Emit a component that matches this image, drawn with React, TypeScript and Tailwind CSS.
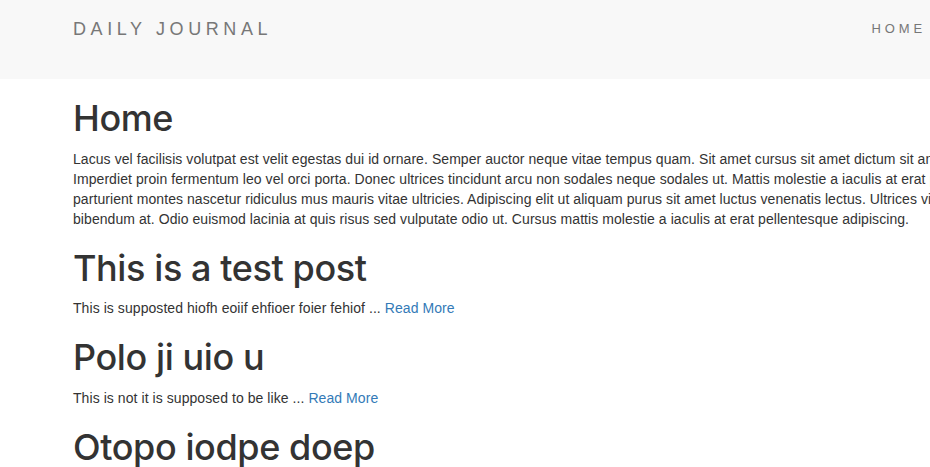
import React from "react";

type Post = {
  title: string;
  excerpt: string;
};

const posts: Post[] = [
  { title: "This is a test post", excerpt: "This is supposted hiofh eoiif ehfioer foier fehiof" },
  { title: "Polo ji uio u", excerpt: "This is not it is supposed to be like" },
  { title: "Otopo iodpe doep", excerpt: "Lorem ipsum dolor sit amet consectetur adipiscing" },
];

// the home text is wider than the window, so the lines are kept as they break
const homeLines = [
  "Lacus vel facilisis volutpat est velit egestas dui id ornare. Semper auctor neque vitae tempus quam. Sit amet cursus sit amet dictum sit amet justo donec enim.",
  "Imperdiet proin fermentum leo vel orci porta. Donec ultrices tincidunt arcu non sodales neque sodales ut. Mattis molestie a iaculis at erat pellentesque adipiscing.",
  "parturient montes nascetur ridiculus mus mauris vitae ultricies. Adipiscing elit ut aliquam purus sit amet luctus venenatis lectus. Ultrices vitae auctor eu augue ut.",
  "bibendum at. Odio euismod lacinia at quis risus sed vulputate odio ut. Cursus mattis molestie a iaculis at erat pellentesque adipiscing.",
];

const headingClass =
  "mt-5 mb-2.5 text-[36px] leading-[1.1] font-medium tracking-[-0.4px] font-['Inter',sans-serif]";

export default function App() {
  return (
    <div
      className="w-full min-h-screen overflow-hidden bg-white text-[#333] text-[14px] leading-5"
      style={{ fontFamily: '"Liberation Sans", Arial, sans-serif' }}
    >
      {/* Navbar */}
      <nav className="h-[79px] bg-[#f8f8f8]">
        <div className="flex justify-between pt-[19px] pl-[73px] pr-[4px]">
          <a className="text-[18px] leading-5 tracking-[4.6px] text-[#777] uppercase">
            Daily Journal
          </a>
          <a className="text-[13px] leading-5 tracking-[0.3em] text-[#777] uppercase">
            Home
          </a>
        </div>
      </nav>

      {/* Contenido */}
      <main className="pl-[73px] tracking-[0.065px]">
        <h1 className={headingClass}>Home</h1>
        <p className="mb-2.5 whitespace-nowrap">
          {homeLines.map((line, i) => (
            <span key={i} className="block">
              {line}
            </span>
          ))}
        </p>

        {posts.map((post) => (
          <div key={post.title}>
            <h1 className={headingClass}>{post.title}</h1>
            <p className="mb-2.5">
              {post.excerpt} ...{" "}
              <a href="#" className="text-[#337ab7]">
                Read More
              </a>
            </p>
          </div>
        ))}
      </main>
    </div>
  );
}
